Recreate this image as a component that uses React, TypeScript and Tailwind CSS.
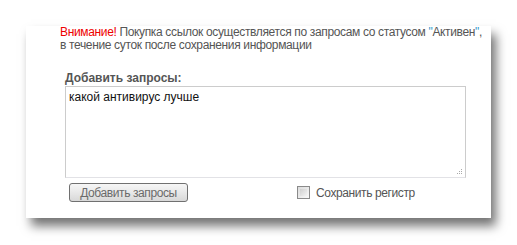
export default function App() {
  return (
    <div className="w-[517px] h-[245px] bg-white pt-[26px] pl-[26px] font-['Liberation_Sans',Arial,sans-serif]">
      <div className="w-[465px] h-[192px] bg-white shadow-[5px_8px_10px_rgba(0,0,0,0.55)] relative">
        {/* notice */}
        <div className="pl-[34px] text-[12px] leading-[13px] text-[#555] tracking-[-0.35px] whitespace-nowrap">
          <span className="text-[#e00]">Внимание!</span> Покупка ссылок осуществляется по запросам со статусом{' '}
          <span className="text-[#39c]">"</span>Активен<span className="text-[#39c]">"</span>,
          <br />в течение суток после сохранения информации
        </div>

        <div className="pl-[39px] pt-[19px]">
          <div className="text-[12px] leading-[14px] font-bold text-[#555]">Добавить запросы:</div>
          <div className="mt-[1px] w-[401px] h-[92px] border border-[#ccc] border-b-[#e2e2e6] relative">
            <div className="pl-[3px] pt-[3px] text-[12px] leading-[14px] text-[#111]">какой антивирус лучше</div>
            <svg className="absolute right-[2px] bottom-[2px]" width="7" height="7" viewBox="0 0 7 7">
              <rect x="5" y="1" width="1" height="1" fill="#aaa" />
              <rect x="3" y="3" width="1" height="1" fill="#aaa" />
              <rect x="5" y="3" width="1" height="1" fill="#aaa" />
              <rect x="1" y="5" width="1" height="1" fill="#aaa" />
              <rect x="3" y="5" width="1" height="1" fill="#aaa" />
              <rect x="5" y="5" width="1" height="1" fill="#aaa" />
            </svg>
          </div>

          <div className="flex items-center mt-[5px]">
            <button className="ml-[4px] w-[119px] h-[19px] rounded-[3px] border border-[#707070] bg-gradient-to-b from-[#f6f6f6] via-[#e8e8e8] to-[#d8d8d8] text-[12px] leading-[14px] text-[#6a6a6a] tracking-[-0.4px]">
              Добавить запросы
            </button>
            <div className="ml-[109px] mt-[-1px] flex items-center">
              <span className="w-[13px] h-[13px] border border-[#8a8a8a] bg-gradient-to-br from-[#dcdcdc] to-[#f8f8f8] p-[2px]">
                <span className="block w-full h-full bg-gradient-to-br from-[#cfcfcf] to-[#f2f2f2]" />
              </span>
              <span className="ml-[6px] text-[12px] leading-[14px] text-[#555] mt-[2px] tracking-[-0.4px]">Сохранить регистр</span>
            </div>
          </div>
        </div>
      </div>
    </div>
  );
}
